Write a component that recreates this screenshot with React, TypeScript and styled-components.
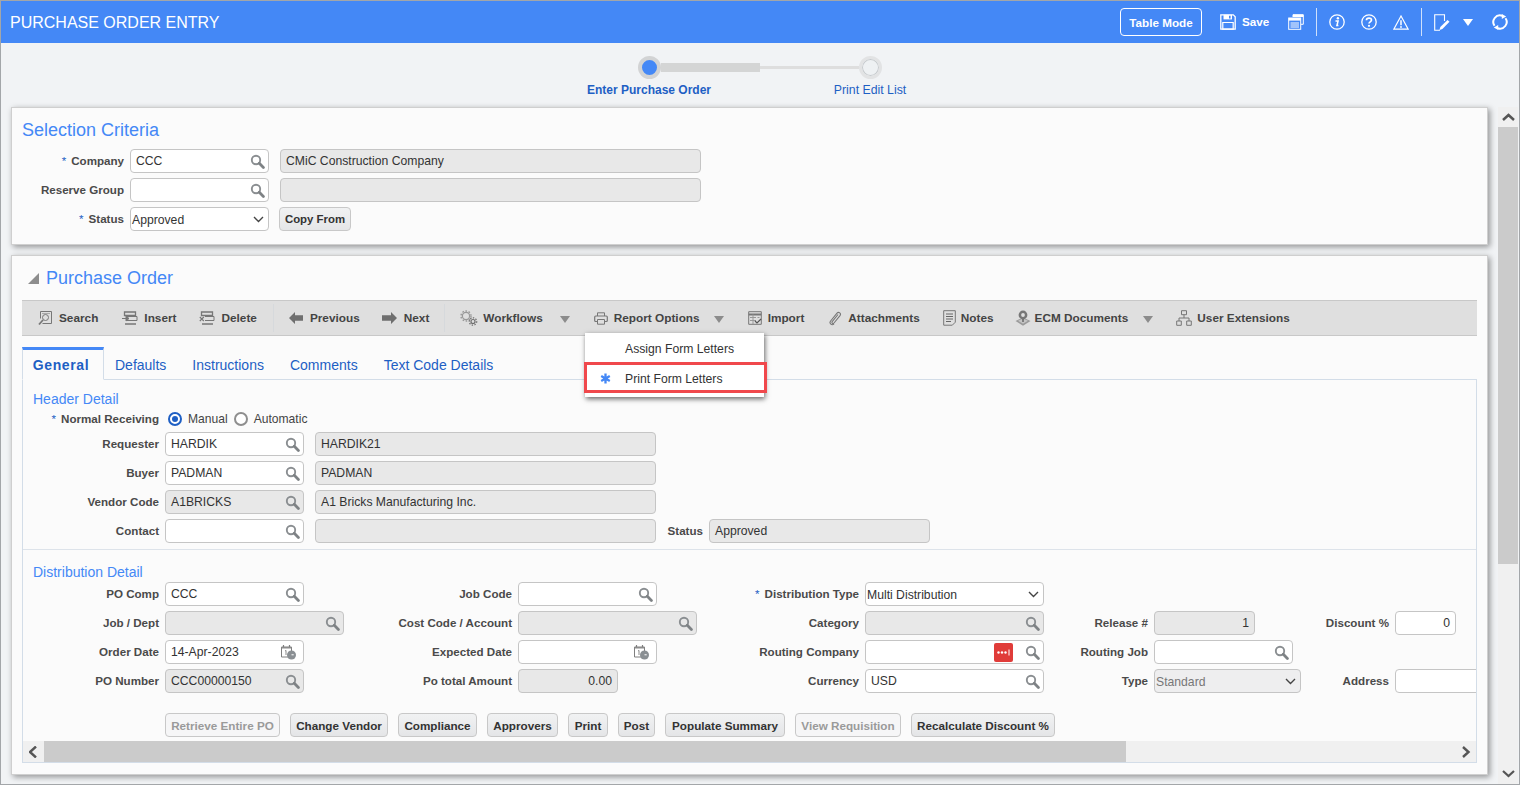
import React from "react";
import styled, { createGlobalStyle } from "styled-components";

const Global = createGlobalStyle`
  html, body { margin: 0; padding: 0; background: #f1f3f5; }
  * { box-sizing: border-box; }
  body { font-family: "Liberation Sans", Arial, sans-serif; }
`;

const Frame = styled.div`
  width: 1520px; height: 785px; overflow: hidden; display: flex; flex-direction: column;
  border: 1px solid #a3a6a9; background: #f1f3f5;
`;
const Header = styled.header`
  height: 42px; flex: none; background: #4488f6; color: #fff; display: flex; align-items: center; padding: 0 11px 0 9px;
`;
const Title = styled.h1`
  margin: 2px 0 0; font-size: 16px; font-weight: 400; flex: 1; letter-spacing: 0;
`;
const TableMode = styled.button`
  width: 82px; height: 28px; border: 1px solid #fff; border-radius: 4px; background: transparent; color: #fff;
  font: 700 11.7px "Liberation Sans", sans-serif; padding: 0; margin-right: 18px;
`;
const HeaderIcon = styled.span<{ $ml?: number; $w?: number }>`
  display: inline-flex; align-items: center; justify-content: center; width: ${p => p.$w ?? 16}px; height: 18px; margin-left: ${p => p.$ml ?? 0}px; flex: none;
  svg { display: block; }
`;
const SaveText = styled.span`
  font-weight: 700; font-size: 11.7px; margin-left: 6px; width: 27px; white-space: nowrap; margin-top: -1px;
`;
const HeaderSep = styled.span<{ $ml: number }>`
  width: 1px; height: 28px; background: #cfe0fb; margin-left: ${p => p.$ml}px; flex: none;
`;
const Body = styled.div`
  flex: 1; min-height: 0; display: flex;
`;
const Main = styled.main`
  width: 1497px; flex: none; display: flex; flex-direction: column; padding-left: 10px;
`;
const Stepper = styled.div`
  height: 64px; flex: none; display: grid; grid-template-columns: 221px 221px; justify-content: start; margin-left: 527.5px; padding-top: 12px;
`;
const Step = styled.div`
  display: flex; flex-direction: column; align-items: stretch;
`;
const StepTrack = styled.div`
  display: flex; align-items: center; height: 24px;
`;
const Connector = styled.span<{ $thick?: boolean; $hidden?: boolean }>`
  flex: 1; height: ${p => (p.$thick ? 9 : 3)}px; background: ${p => (p.$hidden ? "transparent" : p.$thick ? "#d4d5d5" : "#dedede")};
`;
const Dot = styled.span<{ $on?: boolean }>`
  width: 23px; height: 23px; border-radius: 50%; flex: none;
  background: ${p => (p.$on ? "#4488f6" : "#eef1f3")};
  border: ${p => (p.$on ? "4px solid #d2d3d4" : "3px solid #e2e3e4")};
  box-shadow: ${p => (p.$on ? "none" : "inset 0 0 0 1px #c6cacd")};
`;
const StepLabel = styled.span<{ $bold?: boolean }>`
  font-size: ${p => (p.$bold ? 12 : 12.3)}px; color: #1e5fc4; text-align: center; margin-top: 4px; font-weight: ${p => (p.$bold ? 700 : 400)}; white-space: nowrap;
`;
const Panel = styled.section<{ $h: number; $mb?: number }>`
  width: 1477px; height: ${p => p.$h}px; flex: none; background: #fbfbfb; border: 1px solid #cfcfcf;
  box-shadow: 2px 2px 6px rgba(0,0,0,.4); margin-bottom: ${p => p.$mb ?? 0}px; position: relative;
`;
const SelectionBody = styled.div`
  padding: 11px 10px 0 10px;
`;
const PanelTitle = styled.h2<{ $ml?: number }>`
  margin: 0 0 0 ${p => p.$ml ?? 0}px; font-size: 18px; line-height: 22px; font-weight: 400; color: #4488f6;
`;
const SelGrid = styled.div`
  display: grid; grid-template-columns: 108px 150px auto; grid-auto-rows: 24px; row-gap: 5px; margin-top: 8px; align-items: center;
`;
const Label = styled.label<{ $pr?: number }>`
  display: block; text-align: right; font-size: 11.6px; font-weight: 700; color: #4a4a4a; padding-right: ${p => p.$pr ?? 6}px; white-space: nowrap; line-height: 24px; height: 24px;
`;
const Req = styled.span`
  color: #1e5fc4; font-weight: 400; margin-right: 5px;
`;
const Control = styled.div<{ $w: number; $ro?: boolean; $right?: boolean; $ml?: number; $sel?: boolean }>`
  width: ${p => p.$w}px; height: 24px; flex: none; margin-left: ${p => p.$ml ?? 0}px;
  border: 1px solid #c5c5c5; border-radius: 4px; background: ${p => (p.$ro ? "#e8e8e8" : "#fff")};
  display: flex; align-items: center; font-size: 12.2px; color: #333; padding: 0 ${p => (p.$right ? 5 : p.$sel ? 4 : 3)}px 0 ${p => (p.$sel ? 1 : 5)}px;
  white-space: nowrap; overflow: hidden;
  justify-content: ${p => (p.$right ? "flex-end" : "space-between")};
  svg { flex: none; }
`;
const CopyBtn = styled.button`
  height: 24px; width: 72px; margin-left: -1px; border: 1px solid #c8c8c8; border-radius: 4px; background: linear-gradient(#f1f2f3, #e5e6e8);
  font: 700 11.4px "Liberation Sans", sans-serif; color: #333; padding: 0;
`;
const Row3 = styled.div`
  display: flex; align-items: center; gap: 11px;
`;
const PoHead = styled.div`
  display: flex; align-items: center; padding: 0 0 0 16px; height: 44px;
`;
const Collapse = styled.span`
  width: 0; height: 0; border-style: solid; border-width: 0 0 11px 11px; border-color: transparent transparent #8d8d8d transparent; margin-right: 7px; margin-top: 1px;
`;
const Toolbar = styled.nav`
  margin: 0 10px; height: 36px; background: #dfdfdf; border-top: 1px solid #c8c8c8; border-bottom: 1px solid #c8c8c8;
  display: flex; align-items: center; position: relative;
`;
const ToolItem = styled.span<{ $ml: number; $gap?: number }>`
  display: inline-flex; align-items: center; margin-left: ${p => p.$ml}px; gap: ${p => p.$gap ?? 6}px; flex: none;
  font-size: 11.8px; font-weight: 700; color: #444; white-space: nowrap; position: relative;
  svg { flex: none; display: block; }
`;
const Caret = styled.span<{ $ml?: number }>`
  width: 0; height: 0; border-style: solid; border-width: 7px 5px 0 5px; border-color: #8c8c8c transparent transparent transparent; margin-left: ${p => p.$ml ?? 15}px; margin-top: 3px; flex: none;
`;
const ToolSep = styled.span<{ $ml: number }>`
  width: 1px; height: 28px; background: #d6d9dc; margin-left: ${p => p.$ml}px; flex: none;
`;
const Menu = styled.div`
  position: absolute; left: 563px; top: 32px; width: 179px; height: 64px; background: #fff; z-index: 5;
  box-shadow: 1px 2px 5px rgba(0,0,0,.6); padding-top: 1px;
`;
const MenuItem = styled.div`
  height: 30px; display: flex; align-items: center; padding-left: 40px; font-size: 12.2px; color: #333; position: relative;
`;
const Star = styled.span`
  position: absolute; left: 15px; top: 9px; color: #4488f6; display: block; line-height: 0;
`;
const Highlight = styled.div`
  position: absolute; left: 562px; top: 61px; width: 183px; height: 31px; border: 3px solid #f0484c; z-index: 6; pointer-events: none;
`;
const TabBar = styled.div`
  margin: 11px 10px 0 10px; height: 33px; display: flex; align-items: flex-end; border-bottom: 1px solid #d3dde8;
`;
const ActiveTab = styled.span`
  width: 82px; height: 33px; margin-bottom: -1px; background: #fbfbfb; border: 1px solid #d3dde8; border-top: 3px solid #4488f6; border-bottom: 1px solid #fbfbfb;
  font-size: 14px; font-weight: 700; color: #1e5fc4; display: flex; align-items: center; justify-content: center; letter-spacing: .6px; padding-right: 4px;
`;
const TabLink = styled.span<{ $ml: number }>`
  font-size: 14px; color: #1e5fc4; margin-left: ${p => p.$ml}px; line-height: 16px; padding-bottom: 6px; white-space: nowrap;
`;
const FormBox = styled.div`
  margin: 0 10px; height: 383px; border: 1px solid #d3dde8; border-top: 0; overflow: hidden; display: flex; flex-direction: column;
`;
const FormScroll = styled.div`
  flex: 1; min-height: 0; overflow: hidden;
`;
const SubTitle = styled.h3`
  margin: 0; padding-left: 10px; font-size: 14px; font-weight: 400; color: #4488f6; line-height: 16px;
`;
const HeaderSection = styled.div`
  padding-top: 11px; height: 170px; border-bottom: 1px solid #dde3ea;
`;
const FormRow = styled.div<{ $mt?: number }>`
  display: flex; align-items: center; height: 24px; margin-top: ${p => p.$mt ?? 5}px;
`;
const LabelCell = styled(Label)<{ $w?: number }>`
  flex: none; width: ${p => p.$w ?? 142}px;
`;
const Radio = styled.span<{ $on?: boolean }>`
  width: 14px; height: 14px; border-radius: 50%; flex: none; background: #fff;
  border: ${p => (p.$on ? "2px solid #1e5fc4" : "2px solid #8e8e8e")};
  display: flex; align-items: center; justify-content: center;
  &::after { content: ""; width: 6px; height: 6px; border-radius: 50%; background: ${p => (p.$on ? "#1e5fc4" : "transparent")}; }
`;
const RadioText = styled.span<{ $mr?: number }>`
  font-size: 12.1px; color: #444; margin-left: 6px; margin-right: ${p => p.$mr ?? 0}px;
`;
const RadioLead = styled.span`
  width: 3px; flex: none;
`;
const StatusLabel = styled(Label)`
  width: 53px; flex: none;
`;
const DistSection = styled.div`
  padding-top: 14px;
`;
const DistGrid = styled.div`
  display: grid; grid-template-columns: 142px 185px 168px 182px 165px 185px 104px 151px 90px 200px;
  grid-auto-rows: 24px; row-gap: 5px; margin-top: 2px; align-items: center;
`;
const Blank = styled.span``;
const Actions = styled.div`
  display: flex; gap: 10px; margin: 20px 0 0 142px; height: 24px;
`;
const ActionBtn = styled.button<{ $off?: boolean; $w: number }>`
  width: ${p => p.$w}px; height: 24px; padding: 0; flex: none; border: 1px solid #c8c8c8; border-radius: 4px; white-space: nowrap;
  background: ${p => (p.$off ? "#f6f6f7" : "linear-gradient(#f1f2f3, #e4e5e7)")};
  color: ${p => (p.$off ? "#9a9a9a" : "#333")}; font: 700 11.7px "Liberation Sans", sans-serif;
`;
const HScroll = styled.div`
  height: 21px; flex: none; display: flex; background: #f0f0f0;
`;
const ScrollBtn = styled.span`
  width: 21px; flex: none; display: flex; align-items: center; justify-content: center; background: #f0f0f0;
`;
const HThumb = styled.span`
  width: 1082px; flex: none; background: #cbcbcb;
`;
const Spacer = styled.span`
  flex: 1;
`;
const VScroll = styled.aside`
  width: 20px; margin-left: 0; flex: none; background: #f0f0f0; display: flex; flex-direction: column; margin-top: 64px; height: 677px;
`;
const VBtn = styled.span`
  height: 20px; flex: none; display: flex; align-items: center; justify-content: center;
`;
const VThumb = styled.span`
  height: 437px; flex: none; background: #cbcbcb;
`;

const Search = () => (
  <svg width="15" height="15" viewBox="0 0 15 15">
    <circle cx="6" cy="6" r="4.2" fill="none" stroke="#8a8e91" strokeWidth="1.9" />
    <path d="M9.3 9.3 13.4 13.4" stroke="#7e8285" strokeWidth="2.8" strokeLinecap="round" />
  </svg>
);
const Chevron = () => (
  <svg width="11" height="7" viewBox="0 0 11 7"><path d="M1 1l4.5 4.5L10 1" fill="none" stroke="#444" strokeWidth="1.4" /></svg>
);
const CalSlot = styled.span`
  display: inline-flex; margin-right: 3px;
`;
const Calendar = () => (
  <CalSlot>
    <svg width="17" height="16" viewBox="0 0 17 16">
      <path d="M1.5 3h10v10h-10z" fill="#fff" stroke="#7f7f7f" />
      <path d="M3.5 1v3M9.5 1v3" stroke="#7f7f7f" strokeWidth="1.2" />
      <path d="M1.5 3h10v1.5h-10z" fill="#8c8c8c" />
      <path d="M5 7l1-.6V11" fill="none" stroke="#8c8c8c" />
      <circle cx="11.5" cy="11" r="4.5" fill="#8a8f93" />
      <path d="M11.5 10.8h2.2" stroke="#fff" />
    </svg>
  </CalSlot>
);
const RedDots = () => (
  <svg width="19" height="19" viewBox="0 0 19 19">
    <rect width="19" height="19" rx="2" fill="#e03c39" />
    <circle cx="4.5" cy="9.5" r="1.2" fill="#fff" /><circle cx="8" cy="9.5" r="1.2" fill="#fff" /><circle cx="11.5" cy="9.5" r="1.2" fill="#fff" />
    <path d="M15 6.5v6" stroke="#fff" />
  </svg>
);
const g = "#777";
const IconSearchDoc = () => (
  <svg width="15" height="16" viewBox="0 0 15 16">
    <path d="M2.5 1.5h11v12h-9" fill="none" stroke={g} />
    <path d="M2.5 1.5v7" stroke={g} />
    <circle cx="7.5" cy="7.5" r="3" fill="none" stroke={g} />
    <path d="M5 10 1 14.5" stroke={g} strokeWidth="1.8" />
    <path d="M4 3.5h8" stroke="#aaa" />
  </svg>
);
const IconInsert = () => (
  <svg width="16" height="14" viewBox="0 0 16 14">
    <path d="M2.5 1h11v3.5h-11zM3 13h11" fill="none" stroke={g} strokeWidth="1.3" />
    <path d="M5 5.5h10v4H5" fill="none" stroke={g} />
    <path d="M0 7.5h6M4 5l3 2.5L4 10z" fill={g} stroke={g} />
  </svg>
);
const IconDelete = () => (
  <svg width="16" height="14" viewBox="0 0 16 14">
    <path d="M2.5 1h11v3.5h-11zM3 13h11" fill="none" stroke={g} strokeWidth="1.3" />
    <path d="M6 5.5h9v4H6" fill="none" stroke={g} />
    <path d="M.8 6l4 4M4.8 6l-4 4" stroke={g} strokeWidth="1.1" />
  </svg>
);
const ArrowL = () => (<svg width="14" height="12" viewBox="0 0 14 12"><path d="M0 6l6-6v3.2h8v5.6H6V12z" fill="#6f6f6f" /></svg>);
const ArrowR = () => (<svg width="15" height="12" viewBox="0 0 15 12"><path d="M15 6L9 0v3.2H0v5.6h9V12z" fill="#6f6f6f" /></svg>);
const Gears = () => (
  <svg width="18" height="16" viewBox="0 0 18 16">
    <circle cx="6" cy="6" r="3.6" fill="none" stroke="#999" strokeWidth="1.2" />
    <circle cx="6" cy="6" r="5" fill="none" stroke="#999" strokeWidth="1.4" strokeDasharray="1.6 1.6" />
    <circle cx="13" cy="11.5" r="2" fill="none" stroke="#6f6f6f" strokeWidth="1.2" />
    <circle cx="13" cy="11.5" r="3.7" fill="none" stroke="#6f6f6f" strokeWidth="1.3" strokeDasharray="1.4 1.4" />
  </svg>
);
const Printer = () => (
  <svg width="14" height="13" viewBox="0 0 14 13">
    <path d="M3.5 4V.8h7V4" fill="none" stroke={g} />
    <rect x=".7" y="4" width="12.6" height="5.5" rx="1" fill="none" stroke={g} strokeWidth="1.2" />
    <path d="M3.5 7.5h7v4.7h-7z" fill="#dfdfdf" stroke={g} />
  </svg>
);
const ImportIcon = () => (
  <svg width="14" height="14" viewBox="0 0 14 14">
    <path d="M.7.7h12.6v12.6H.7z" fill="none" stroke={g} />
    <path d="M.7 3.5h12.6" stroke={g} strokeWidth="2" />
    <path d="M5 3.5v9.5M2 6.5h6M2 9.5h6M9.5 6.5h2" stroke="#999" />
    <path d="M7 10l2 2 4-4" fill="none" stroke="#555" strokeWidth="1.2" />
  </svg>
);
const Clip = () => (
  <svg width="14" height="15" viewBox="0 0 14 15">
    <path d="M10 3.5 4.2 10.6c-1 1.3.8 2.6 1.8 1.4L12 4.6C13.5 2.6 10.8.3 9 2.2L2.6 10c-1.9 2.5 1.4 5 3.4 2.8" fill="none" stroke="#777" strokeWidth="1.1" />
  </svg>
);
const NotesIcon = () => (
  <svg width="13" height="16" viewBox="0 0 13 16">
    <path d="M.7.7h11.6v11.5l-3 3H.7z" fill="none" stroke={g} />
    <path d="M3 4h7M3 6.5h7M3 9h7M3 11.5h5" stroke="#666" />
  </svg>
);
const EcmIcon = () => (
  <svg width="16" height="16" viewBox="0 0 16 16">
    <path d="M.5 11l7.5-3.4L15.5 11 8 15.8z" fill="#9a9a9a" />
    <path d="M3 10.8l5-2.2 5 2.2-5 3z" fill="#c4c4c4" />
    <circle cx="8" cy="5" r="4.4" fill="#777" />
    <circle cx="8" cy="5" r="1.9" fill="#dfdfdf" />
    <path d="M8 9v3" stroke="#666" strokeWidth="1.5" />
  </svg>
);
const OrgIcon = () => (
  <svg width="16" height="16" viewBox="0 0 16 16">
    <path d="M5.5.7h5v4h-5zM.7 11h4.6v4.3H.7zM10.7 11h4.6v4.3h-4.6z" fill="none" stroke={g} />
    <path d="M8 4.7V8M3 11V8h10v3" fill="none" stroke={g} />
  </svg>
);
const w = "#fff";
const SaveIcon = () => (
  <svg width="16" height="16" viewBox="0 0 16 16">
    <path d="M.8.8h12.5l1.9 1.9v12.5H.8z" fill="none" stroke={w} strokeWidth="1.3" />
    <path d="M3.5.8h8.5v4.6H3.5z" fill={w} />
    <path d="M2.8 8.5h10.4v6.7H2.8z" fill="none" stroke={w} strokeWidth="1.2" />
    <path d="M9 1.8h1.6v2.6H9z" fill="#4488f6" />
  </svg>
);
const Stack = () => (
  <svg width="16" height="16" viewBox="0 0 16 16">
    <path d="M5 3V.7h10.3v9.6H13" fill="none" stroke={w} />
    <path d="M5 .7h10.3v2.3H5z" fill={w} />
    <rect x=".7" y="4" width="12" height="11.3" fill="#4488f6" stroke={w} />
    <path d="M.7 4h12v2.6H.7z" fill={w} />
    <path d="M2.5 9h8.5M2.5 11h8.5M2.5 13h8.5" stroke={w} />
  </svg>
);
const Info = () => (
  <svg width="16" height="16" viewBox="0 0 16 16">
    <circle cx="8" cy="8" r="7.2" fill="none" stroke={w} strokeWidth="1.3" />
    <circle cx="8.9" cy="4.3" r="1.2" fill={w} />
    <path d="M6.5 7h2.6l-1.2 4.6h1.5" fill="none" stroke={w} strokeWidth="1.5" />
  </svg>
);
const Help = () => (
  <svg width="16" height="16" viewBox="0 0 16 16">
    <circle cx="8" cy="8" r="7.2" fill="none" stroke={w} strokeWidth="1.3" />
    <path d="M5.4 6.2C5.5 3.4 10.5 3.4 10.5 6c0 1.8-2.5 1.9-2.5 3.6" fill="none" stroke={w} strokeWidth="1.7" />
    <circle cx="8" cy="11.8" r="1.1" fill={w} />
  </svg>
);
const Warn = () => (
  <svg width="16" height="15" viewBox="0 0 16 15">
    <path d="M8 1 .8 14.2h14.4z" fill="none" stroke={w} strokeWidth="1.2" />
    <path d="M8 5.2v5" stroke={w} strokeWidth="1.5" />
    <circle cx="8" cy="12" r=".9" fill={w} />
  </svg>
);
const EditIcon = () => (
  <svg width="16" height="17" viewBox="0 0 16 17">
    <path d="M10.5 7V.7H.7v15.6h5.3" fill="none" stroke={w} strokeWidth="1.1" />
    <path d="M5.5 16l.8-3L13.5 6l2 1.8L8.4 15z" fill={w} />
  </svg>
);
const Refresh = () => (
  <svg width="16" height="16" viewBox="0 0 16 16">
    <path d="M2.5 11.8A6.7 6.7 0 0 1 10.2 1.7" fill="none" stroke={w} strokeWidth="2" />
    <path d="M13.5 4.2A6.7 6.7 0 0 1 5.8 14.3" fill="none" stroke={w} strokeWidth="2" />
    <path d="M9.8 0l4.4 2.6L9.8 5zM6.2 16l-4.4-2.6L6.2 11z" fill={w} />
  </svg>
);
const WhiteCaret = () => (
  <svg width="10" height="7" viewBox="0 0 10 7"><path d="M0 0h10L5 7z" fill="#fff" /></svg>
);
const Asterisk = () => (
  <svg width="11" height="11" viewBox="0 0 11 11">
    <path d="M5.5 .5v10M1.2 3l8.6 5M9.8 3 1.2 8" stroke="#4488f6" strokeWidth="2.3" />
  </svg>
);
const ArrowSm = ({ d }: { d: string }) => (
  <svg width="10" height="12" viewBox="0 0 10 12"><path d={d} fill="none" stroke="#555" strokeWidth="2.4" /></svg>
);
const UpArrow = () => (<svg width="13" height="8" viewBox="0 0 13 8"><path d="M1 7l5.5-5L12 7" fill="none" stroke="#555" strokeWidth="2.5" /></svg>);
const DownArrow = () => (<svg width="13" height="8" viewBox="0 0 13 8"><path d="M1 1l5.5 5L12 1" fill="none" stroke="#555" strokeWidth="2.2" /></svg>);

type Cell = { label?: string; req?: boolean; value?: string; w?: number; ro?: boolean; icon?: "search" | "cal" | "red" | "select" | "none"; right?: boolean; sel?: boolean; muted?: boolean };

const Val = styled.span<{ $muted?: boolean }>`
  color: ${p => (p.$muted ? "#777" : "#333")};
`;
const SelectVal = styled(Val)`
  padding-top: 2px;
`;
const SelectShell = styled(Control)<{ $muted?: boolean }>`
  background: ${p => (p.$muted ? "#eeeeef" : "#fff")};
`;
const IconPair = styled.span`
  display: inline-flex; align-items: center; gap: 12px; margin-left: auto;
`;

const renderControl = (c: Cell) => {
  if (c.icon === "select")
    return (
      <SelectShell $w={c.w ?? 139} $sel $muted={c.muted}>
        <SelectVal $muted={c.muted}>{c.value}</SelectVal>
        <Chevron />
      </SelectShell>
    );
  return (
    <Control $w={c.w ?? 139} $ro={c.ro} $right={c.right}>
      <Val>{c.value}</Val>
      {c.icon === "cal" ? <Calendar /> : null}
      {c.icon === "red" ? <IconPair><RedDots /><Search /></IconPair> : null}
      {c.icon === undefined || c.icon === "search" ? <Search /> : null}
    </Control>
  );
};

const distRows: Cell[][] = [
  [
    { label: "PO Comp", value: "CCC" },
    { label: "Job Code" },
    { label: "Distribution Type", req: true, value: "Multi Distribution", icon: "select", w: 179 },
    {},
    {},
  ],
  [
    { label: "Job / Dept", ro: true, w: 179 },
    { label: "Cost Code / Account", ro: true, w: 179 },
    { label: "Category", ro: true, w: 179 },
    { label: "Release #", value: "1", ro: true, right: true, icon: "none", w: 101 },
    { label: "Discount %", value: "0", right: true, icon: "none", w: 61 },
  ],
  [
    { label: "Order Date", value: "14-Apr-2023", icon: "cal" },
    { label: "Expected Date", icon: "cal" },
    { label: "Routing Company", icon: "red", w: 179 },
    { label: "Routing Job" },
    {},
  ],
  [
    { label: "PO Number", value: "CCC00000150", ro: true },
    { label: "Po total Amount", value: "0.00", ro: true, right: true, icon: "none", w: 100 },
    { label: "Currency", value: "USD", w: 179 },
    { label: "Type", value: "Standard", icon: "select", w: 147, muted: true },
    { label: "Address", icon: "none", w: 139 },
  ],
];

const actions: { t: string; w: number; off?: boolean }[] = [
  { t: "Retrieve Entire PO", w: 115, off: true },
  { t: "Change Vendor", w: 98 },
  { t: "Compliance", w: 79 },
  { t: "Approvers", w: 71 },
  { t: "Print", w: 40 },
  { t: "Post", w: 37 },
  { t: "Populate Summary", w: 120 },
  { t: "View Requisition", w: 106, off: true },
  { t: "Recalculate Discount %", w: 144 },
];

const headerRows: { label: string; value: string; desc: string; ro?: boolean }[] = [
  { label: "Requester", value: "HARDIK", desc: "HARDIK21" },
  { label: "Buyer", value: "PADMAN", desc: "PADMAN" },
  { label: "Vendor Code", value: "A1BRICKS", desc: "A1 Bricks Manufacturing Inc.", ro: true },
];

export default function App() {
  return (
    <>
      <Global />
      <Frame>
        <Header>
          <Title>PURCHASE ORDER ENTRY</Title>
          <TableMode>Table Mode</TableMode>
          <HeaderIcon><SaveIcon /></HeaderIcon>
          <SaveText>Save</SaveText>
          <HeaderIcon $ml={19}><Stack /></HeaderIcon>
          <HeaderSep $ml={12} />
          <HeaderIcon $ml={12}><Info /></HeaderIcon>
          <HeaderIcon $ml={16}><Help /></HeaderIcon>
          <HeaderIcon $ml={16}><Warn /></HeaderIcon>
          <HeaderSep $ml={12} />
          <HeaderIcon $ml={12}><EditIcon /></HeaderIcon>
          <HeaderIcon $ml={13} $w={10}><WhiteCaret /></HeaderIcon>
          <HeaderIcon $ml={19}><Refresh /></HeaderIcon>
        </Header>
        <Body>
          <Main>
            <Stepper>
              <Step>
                <StepTrack>
                  <Connector $hidden />
                  <Dot $on />
                  <Connector $thick />
                </StepTrack>
                <StepLabel $bold>Enter Purchase Order</StepLabel>
              </Step>
              <Step>
                <StepTrack>
                  <Connector />
                  <Dot />
                  <Connector $hidden />
                </StepTrack>
                <StepLabel>Print Edit List</StepLabel>
              </Step>
            </Stepper>

            <Panel $h={138} $mb={10}>
              <SelectionBody>
                <PanelTitle>Selection Criteria</PanelTitle>
                <SelGrid>
                  <Label><Req>*</Req>Company</Label>
                  <Control $w={139}><Val>CCC</Val><Search /></Control>
                  <Control $w={421} $ro><Val>CMiC Construction Company</Val></Control>
                  <Label>Reserve Group</Label>
                  <Control $w={139}><Val /><Search /></Control>
                  <Control $w={421} $ro />
                  <Label><Req>*</Req>Status</Label>
                  <Control $w={139} $sel><SelectVal>Approved</SelectVal><Chevron /></Control>
                  <Row3><CopyBtn>Copy From</CopyBtn></Row3>
                </SelGrid>
              </SelectionBody>
            </Panel>

            <Panel $h={520}>
              <PoHead>
                <Collapse />
                <PanelTitle>Purchase Order</PanelTitle>
              </PoHead>
              <Toolbar>
                <ToolItem $ml={16}><IconSearchDoc />Search</ToolItem>
                <ToolItem $ml={24}><IconInsert />Insert</ToolItem>
                <ToolItem $ml={23}><IconDelete />Delete</ToolItem>
                <ToolSep $ml={16} />
                <ToolItem $ml={15} $gap={7}><ArrowL />Previous</ToolItem>
                <ToolItem $ml={22} $gap={7}><ArrowR />Next</ToolItem>
                <ToolSep $ml={15} />
                <ToolItem $ml={15} $gap={5}><Gears />Workflows</ToolItem>
                <Caret $ml={17} />
                <ToolItem $ml={24}><Printer />Report Options</ToolItem>
                <Caret $ml={14} />
                <ToolItem $ml={24}><ImportIcon />Import</ToolItem>
                <ToolItem $ml={24}><Clip />Attachments</ToolItem>
                <ToolItem $ml={23} $gap={5}><NotesIcon />Notes</ToolItem>
                <ToolItem $ml={21} $gap={4}><EcmIcon />ECM Documents</ToolItem>
                <Caret />
                <ToolItem $ml={23} $gap={5}><OrgIcon />User Extensions</ToolItem>
                <Menu>
                  <MenuItem>Assign Form Letters</MenuItem>
                  <MenuItem><Star><Asterisk /></Star>Print Form Letters</MenuItem>
                </Menu>
                <Highlight />
              </Toolbar>
              <TabBar>
                <ActiveTab>General</ActiveTab>
                <TabLink $ml={11}>Defaults</TabLink>
                <TabLink $ml={26}>Instructions</TabLink>
                <TabLink $ml={26}>Comments</TabLink>
                <TabLink $ml={26}>Text Code Details</TabLink>
              </TabBar>
              <FormBox>
                <FormScroll>
                  <HeaderSection>
                    <SubTitle>Header Detail</SubTitle>
                    <FormRow $mt={0}>
                      <LabelCell><Req>*</Req>Normal Receiving</LabelCell>
                      <RadioLead />
                      <Radio $on />
                      <RadioText $mr={6}>Manual</RadioText>
                      <Radio />
                      <RadioText>Automatic</RadioText>
                    </FormRow>
                    {headerRows.map((r, i) => (
                      <FormRow key={r.label} $mt={i === 0 ? 1 : 5}>
                        <LabelCell>{r.label}</LabelCell>
                        <Control $w={139} $ro={r.ro}><Val>{r.value}</Val><Search /></Control>
                        <Control $w={341} $ro $ml={11}><Val>{r.desc}</Val></Control>
                      </FormRow>
                    ))}
                    <FormRow>
                      <LabelCell>Contact</LabelCell>
                      <Control $w={139}><Val /><Search /></Control>
                      <Control $w={341} $ro $ml={11} />
                      <StatusLabel>Status</StatusLabel>
                      <Control $w={221} $ro><Val>Approved</Val></Control>
                    </FormRow>
                  </HeaderSection>
                  <DistSection>
                    <SubTitle>Distribution Detail</SubTitle>
                    <DistGrid>
                      {distRows.flatMap((row, ri) =>
                        row.flatMap((c, ci) => [
                          <Label key={`l${ri}-${ci}`}>
                            {c.req ? <Req>*</Req> : null}
                            {c.label}
                          </Label>,
                          c.label ? (
                            <React.Fragment key={`c${ri}-${ci}`}>{renderControl(c)}</React.Fragment>
                          ) : (
                            <Blank key={`c${ri}-${ci}`} />
                          ),
                        ])
                      )}
                    </DistGrid>
                    <Actions>
                      {actions.map(a => (
                        <ActionBtn key={a.t} $off={a.off} $w={a.w}>{a.t}</ActionBtn>
                      ))}
                    </Actions>
                  </DistSection>
                </FormScroll>
                <HScroll>
                  <ScrollBtn><ArrowSm d="M7 .5 1 6l6 5.5" /></ScrollBtn>
                  <HThumb />
                  <Spacer />
                  <ScrollBtn><ArrowSm d="M2 1l5.5 5L2 11" /></ScrollBtn>
                </HScroll>
              </FormBox>
            </Panel>
          </Main>
          <VScroll>
            <VBtn><UpArrow /></VBtn>
            <VThumb />
            <Spacer />
            <VBtn><DownArrow /></VBtn>
          </VScroll>
        </Body>
      </Frame>
    </>
  );
}
